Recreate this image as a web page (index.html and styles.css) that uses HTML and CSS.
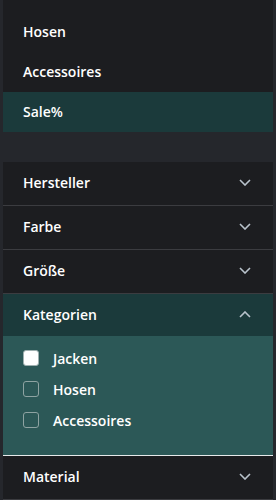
FILE: index.html
```html
<!DOCTYPE html>
<html lang="de">
<head>
<meta charset="utf-8">
<link rel="stylesheet" href="styles.css">
</head>
<body>
<div class="page">
  <nav class="menu">
    <a class="menu-item">Hosen</a>
    <a class="menu-item">Accessoires</a>
    <a class="menu-item active">Sale%</a>
  </nav>
  <div class="filters">
    <div class="filter">
      <div class="filter-head"><span>Hersteller</span>
        <svg class="chev" viewBox="0 0 12 7"><path d="M1 1l5 5 5-5"/></svg></div>
    </div>
    <div class="filter">
      <div class="filter-head"><span>Farbe</span>
        <svg class="chev" viewBox="0 0 12 7"><path d="M1 1l5 5 5-5"/></svg></div>
    </div>
    <div class="filter">
      <div class="filter-head"><span>Größe</span>
        <svg class="chev" viewBox="0 0 12 7"><path d="M1 1l5 5 5-5"/></svg></div>
    </div>
    <div class="filter open">
      <div class="filter-head"><span>Kategorien</span>
        <svg class="chev" viewBox="0 0 12 7"><path d="M1 6l5-5 5 5"/></svg></div>
      <div class="filter-body">
        <label class="opt"><span class="box checked"></span>Jacken</label>
        <label class="opt"><span class="box"></span>Hosen</label>
        <label class="opt"><span class="box"></span>Accessoires</label>
      </div>
    </div>
    <div class="filter last">
      <div class="filter-head"><span>Material</span>
        <svg class="chev" viewBox="0 0 12 7"><path d="M1 1l5 5 5-5"/></svg></div>
    </div>
  </div>
</div>
</body>
</html>
```
FILE: styles.css
```css
html, body {
  margin: 0;
  padding: 0;
  background: #25272c;
}
body {
  font-family: "Open Sans", "Noto Sans", sans-serif;
  font-weight: 600;
  font-size: 14px;
  color: #ffffff;
}
.page {
  width: 270px;
  margin: 0 3px;
}
.menu {
  background: #1c1d20;
  padding-top: 12px;
  display: flex;
  flex-direction: column;
}
.menu-item {
  height: 40px;
  box-sizing: border-box;
  padding: 0 0 2px 20px;
  display: flex;
  align-items: center;
}
.menu-item.active {
  background: #1b3a3b;
}
.filters {
  margin-top: 30px;
  background: #1c1d20;
}
.filter {
  border-bottom: 1px solid #3b3c40;
}
.filter.open {
  border-bottom: 1px solid #e6e9ea;
}
.filter-head {
  height: 43px;
  box-sizing: border-box;
  display: flex;
  align-items: center;
  justify-content: space-between;
  padding: 0 22px 2px 20px;
}
.filter.open .filter-head {
  height: 42px;
  background: #1b3a3b;
}
.chev {
  width: 12px;
  height: 7px;
  fill: none;
  stroke: #b9c3cc;
  stroke-width: 1.6;
}
.filter-body {
  background: #2c5857;
  padding: 7px 20px 19px;
  display: flex;
  flex-direction: column;
}
.opt {
  height: 31px;
  box-sizing: border-box;
  padding-bottom: 1px;
  display: flex;
  align-items: center;
  gap: 14px;
}
.box {
  width: 14px;
  height: 14px;
  border: 1px solid #8ea3a2;
  border-radius: 3px;
  box-sizing: content-box;
}
.box.checked {
  background: #ffffff;
  border-color: #9fb0b0;
}
```
